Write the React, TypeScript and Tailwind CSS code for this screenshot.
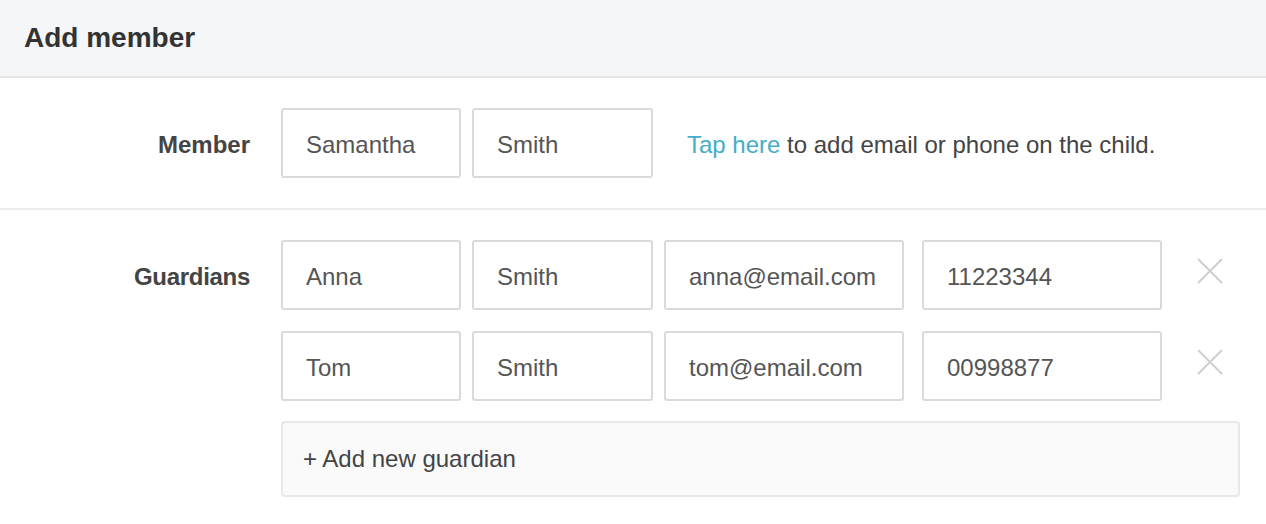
import { useState } from "react";

type Guardian = {
  firstName: string;
  lastName: string;
  email: string;
  phone: string;
};

const FONT = "font-['Liberation_Sans',Arial,sans-serif]";

const inputClass =
  "h-[70px] rounded-[3px] border-2 border-[#dadada] bg-white px-[23px] pt-[4px] text-[24px] text-[#555] outline-none focus:border-[#45adc8]";

function CloseIcon() {
  return (
    <svg width="26" height="26" viewBox="0 0 26 26" fill="none" aria-hidden="true">
      <path d="M1 1L25 25M25 1L1 25" stroke="#cfcfcf" strokeWidth="2" />
    </svg>
  );
}

export default function App() {
  const [guardians, setGuardians] = useState<Guardian[]>([
    { firstName: "Anna", lastName: "Smith", email: "anna@email.com", phone: "11223344" },
    { firstName: "Tom", lastName: "Smith", email: "tom@email.com", phone: "00998877" },
  ]);

  function removeGuardian(index: number) {
    setGuardians((current) => current.filter((_, i) => i !== index));
  }

  function addGuardian() {
    setGuardians((current) => [
      ...current,
      { firstName: "", lastName: "", email: "", phone: "" },
    ]);
  }

  return (
    <main className={`min-h-screen bg-white ${FONT}`}>
      <header className="flex h-[78px] items-center border-b-2 border-[#e6e6e6] bg-[#f5f6f8] px-6">
        <h1 className="text-[28px] font-bold text-[#333]">Add member</h1>
      </header>

      <section className="flex items-center border-b-2 border-[#ececec] pb-[30px] pt-[30px]">
        <label className="w-[250px] pt-[3px] text-right text-[24px] font-bold text-[#444]">
          Member
        </label>
        <div className="ml-[31px] flex items-center gap-[11px]">
          <input defaultValue="Samantha" className={`w-[180px] ${inputClass}`} />
          <input defaultValue="Smith" className={`w-[181px] ${inputClass}`} />
        </div>
        <p className="ml-[34px] pt-[3px] text-[24px] text-[#444]">
          <button className="text-[#45adc8]">Tap here</button> to add email or phone on
          the child.
        </p>
      </section>

      <section className="flex pt-[30px]">
        <label className="mt-[19px] w-[250px] text-right text-[24px] font-bold tracking-[-0.3px] text-[#444]">
          Guardians
        </label>
        <div className="ml-[31px] flex flex-col gap-[21px]">
          {guardians.map((guardian, index) => (
            <div key={index} className="flex items-center">
              <input defaultValue={guardian.firstName} className={`w-[180px] ${inputClass}`} />
              <input
                defaultValue={guardian.lastName}
                className={`ml-[11px] w-[181px] ${inputClass}`}
              />
              <input
                defaultValue={guardian.email}
                className={`ml-[11px] w-[240px] ${inputClass}`}
              />
              <input
                defaultValue={guardian.phone}
                className={`ml-[18px] w-[240px] ${inputClass}`}
              />
              <button
                type="button"
                onClick={() => removeGuardian(index)}
                className="ml-[35px] -mt-[8px] flex h-[26px] w-[26px] items-center justify-center"
              >
                <CloseIcon />
              </button>
            </div>
          ))}
          <button
            type="button"
            onClick={addGuardian}
            className="-mt-[1px] flex h-[76px] w-[959px] items-center rounded-[4px] border-2 border-[#e8e8e8] bg-[#fafafa] px-[20px] text-left text-[24px] text-[#444]"
          >
            + Add new guardian
          </button>
        </div>
      </section>
    </main>
  );
}
